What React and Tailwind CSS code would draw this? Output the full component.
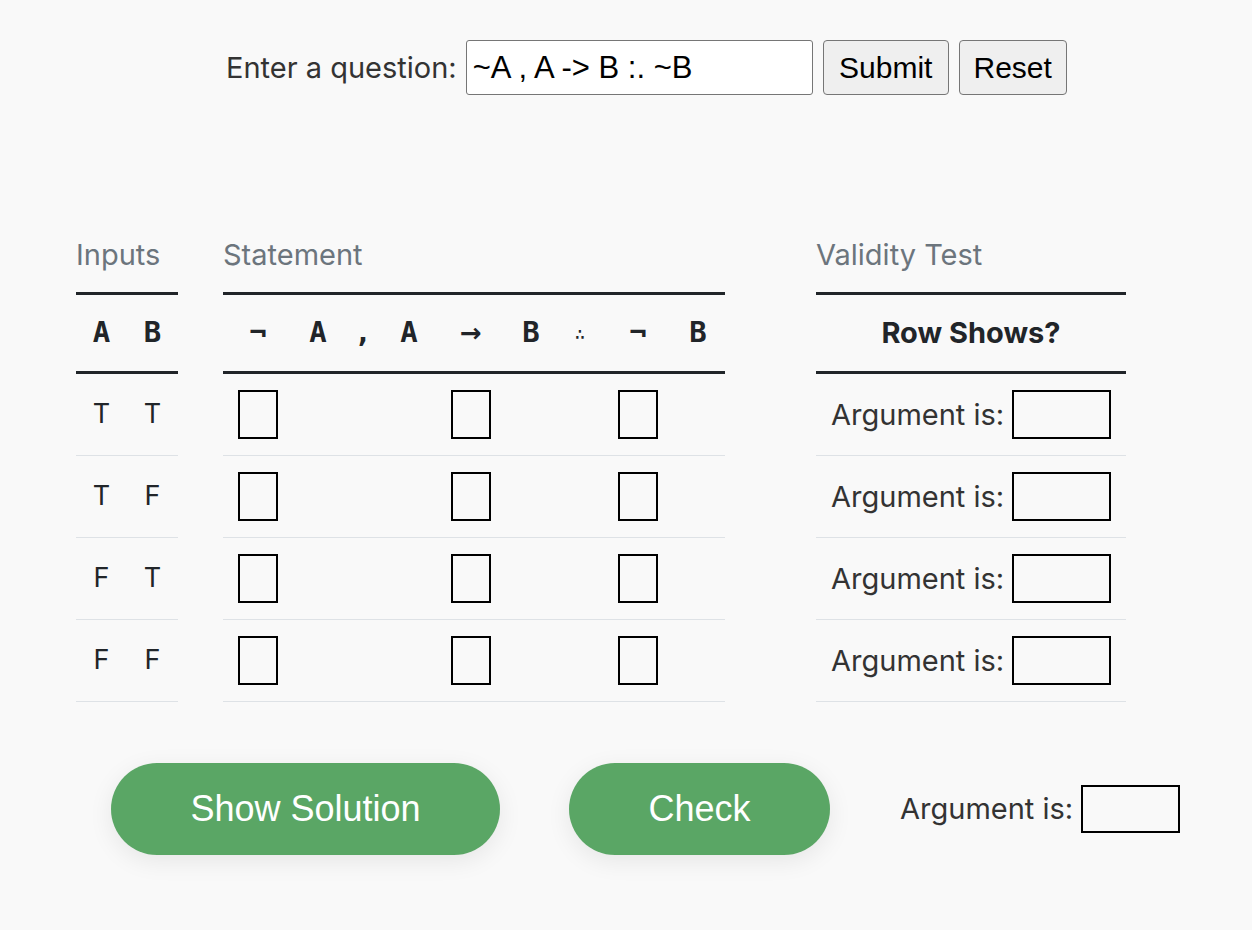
import React from "react";

const rows = [
  ["T", "T"],
  ["T", "F"],
  ["F", "T"],
  ["F", "F"],
];

const symbols = [
  { s: "¬", w: "w-[70px]", box: true },
  { s: "A", w: "w-[50px]" },
  { s: ",", w: "w-[40px]" },
  { s: "A", w: "w-[52px]" },
  { s: "→", w: "w-[72px]", box: true, arrow: true },
  { s: "B", w: "w-[48px]" },
  { s: "∴", w: "w-[50px]", small: true },
  { s: "¬", w: "w-[66px]", box: true },
  { s: "B", w: "w-[54px]" },
];

const sans = { fontFamily: "Inter, 'Noto Sans', sans-serif" };
const helv = { fontFamily: "'Liberation Sans', Arial, sans-serif" };
const mono = { fontFamily: "'DejaVu Sans Mono', 'Liberation Mono', monospace" };
const dejavu = { fontFamily: "'DejaVu Sans', sans-serif" };

function ColumnLabel({ children }) {
  return (
    <div className="h-[34px] text-[29px] leading-[34px] text-[#6c757d] mb-[20px]" style={sans}>
      {children}
    </div>
  );
}

function Box({ className = "" }) {
  return <div className={"border-2 border-black " + className} />;
}

export default function App() {
  return (
    <div className="min-h-screen bg-[#f9f9f9] text-[#212529]" style={sans}>
      <div className="flex items-center pt-[40px] pl-[226px]">
        <label className="text-[29px] text-[#333] mr-[9px]" style={sans}>
          Enter a question:
        </label>
        <input
          className="w-[347px] h-[55px] border border-[#767676] rounded-[3px] bg-white px-[6px] text-[31px] text-black outline-none"
          style={helv}
          defaultValue="~A , A -> B :. ~B"
        />
        <button
          className="ml-[10px] w-[126px] h-[55px] border border-[#767676] rounded-[4px] bg-[#efefef] text-[30px] text-black"
          style={helv}
        >
          Submit
        </button>
        <button
          className="ml-[10px] w-[108px] h-[55px] border border-[#767676] rounded-[4px] bg-[#efefef] text-[30px] text-black"
          style={helv}
        >
          Reset
        </button>
      </div>

      <div className="flex pl-[76px] pt-[143px]">
        {/* inputs */}
        <div className="w-[102px]">
          <ColumnLabel>Inputs</ColumnLabel>
          <div className="flex h-[82px] items-center border-y-[3px] border-[#212529]">
            <div className="w-[51px] text-center text-[29px] font-bold" style={mono}>A</div>
            <div className="w-[51px] text-center text-[29px] font-bold" style={mono}>B</div>
          </div>
          {rows.map((r, i) => (
            <div key={i} className="flex h-[82px] items-center border-b border-[#dee2e6]">
              <div className="w-[51px] text-center text-[27px]">{r[0]}</div>
              <div className="w-[51px] text-center text-[27px]">{r[1]}</div>
            </div>
          ))}
        </div>

        {/* statement */}
        <div className="ml-[45px] w-[502px]">
          <ColumnLabel>Statement</ColumnLabel>
          <div className="flex h-[82px] items-center border-y-[3px] border-[#212529]">
            {symbols.map((c, i) => (
              <div
                key={i}
                className={
                  c.w +
                  " text-center " +
                  (c.small ? "text-[18px] font-normal" : c.arrow ? "text-[26px] font-bold" : "text-[29px] font-bold")
                }
                style={c.arrow ? dejavu : mono}
              >
                {c.s}
              </div>
            ))}
          </div>
          {rows.map((r, i) => (
            <div key={i} className="flex h-[82px] items-center border-b border-[#dee2e6]">
              {symbols.map((c, j) => (
                <div key={j} className={c.w + " flex justify-center"}>
                  {c.box && <Box className="w-[40px] h-[49px]" />}
                </div>
              ))}
            </div>
          ))}
        </div>

        {/* validity */}
        <div className="ml-[91px] w-[310px]">
          <ColumnLabel>Validity Test</ColumnLabel>
          <div className="flex h-[82px] items-center justify-center border-y-[3px] border-[#212529] text-[29px] font-bold">
            Row Shows?
          </div>
          {rows.map((r, i) => (
            <div key={i} className="flex h-[82px] items-center border-b border-[#dee2e6] pl-[15px]">
              <span className="text-[29px] text-[#333]">Argument is:</span>
              <Box className="ml-[8px] w-[99px] h-[49px]" />
            </div>
          ))}
        </div>
      </div>

      <div className="flex items-center pl-[111px] pt-[61px]">
        <button
          className="w-[389px] h-[92px] rounded-full bg-[#5aa665] text-white text-[36px] shadow-[0_6px_24px_rgba(0,0,0,0.08)]"
          style={helv}
        >
          Show Solution
        </button>
        <button
          className="ml-[69px] w-[261px] h-[92px] rounded-full bg-[#5aa665] text-white text-[36px] shadow-[0_6px_24px_rgba(0,0,0,0.08)]"
          style={helv}
        >
          Check
        </button>
        <span className="ml-[70px] text-[29px] text-[#333]">Argument is:</span>
        <Box className="ml-[8px] w-[99px] h-[48px]" />
      </div>
    </div>
  );
}
